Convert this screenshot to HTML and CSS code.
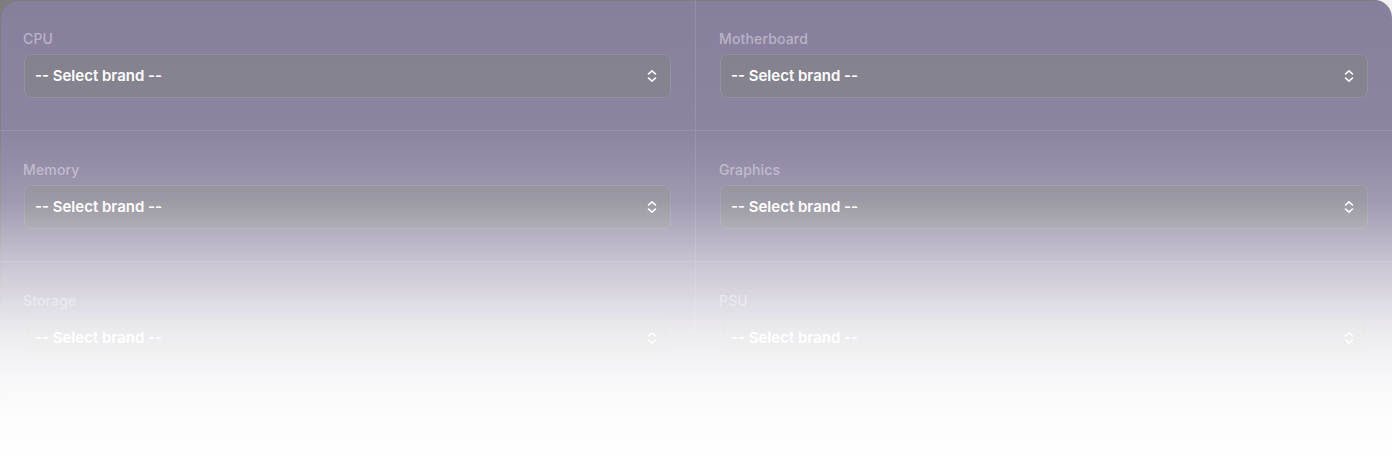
FILE: index.html
```html
<!DOCTYPE html>
<html>
<head>
<meta charset="utf-8">
<link rel="stylesheet" href="styles.css">
</head>
<body>
<div class="card">
  <div class="grid">
    <div class="cell">
      <div class="label">CPU</div>
      <div class="select"><span>-- Select brand --</span><svg class="chev" width="10" height="14" viewBox="0 0 10 14"><path d="M1.5 5 L5 1.8 L8.5 5 M1.5 9 L5 12.2 L8.5 9" fill="none" stroke="#fff" stroke-width="1.6" stroke-linecap="round" stroke-linejoin="round"/></svg></div>
    </div>
    <div class="cell">
      <div class="label">Motherboard</div>
      <div class="select"><span>-- Select brand --</span><svg class="chev" width="10" height="14" viewBox="0 0 10 14"><path d="M1.5 5 L5 1.8 L8.5 5 M1.5 9 L5 12.2 L8.5 9" fill="none" stroke="#fff" stroke-width="1.6" stroke-linecap="round" stroke-linejoin="round"/></svg></div>
    </div>
    <div class="cell">
      <div class="label">Memory</div>
      <div class="select"><span>-- Select brand --</span><svg class="chev" width="10" height="14" viewBox="0 0 10 14"><path d="M1.5 5 L5 1.8 L8.5 5 M1.5 9 L5 12.2 L8.5 9" fill="none" stroke="#fff" stroke-width="1.6" stroke-linecap="round" stroke-linejoin="round"/></svg></div>
    </div>
    <div class="cell">
      <div class="label">Graphics</div>
      <div class="select"><span>-- Select brand --</span><svg class="chev" width="10" height="14" viewBox="0 0 10 14"><path d="M1.5 5 L5 1.8 L8.5 5 M1.5 9 L5 12.2 L8.5 9" fill="none" stroke="#fff" stroke-width="1.6" stroke-linecap="round" stroke-linejoin="round"/></svg></div>
    </div>
    <div class="cell">
      <div class="label">Storage</div>
      <div class="select"><span>-- Select brand --</span><svg class="chev" width="10" height="14" viewBox="0 0 10 14"><path d="M1.5 5 L5 1.8 L8.5 5 M1.5 9 L5 12.2 L8.5 9" fill="none" stroke="#fff" stroke-width="1.6" stroke-linecap="round" stroke-linejoin="round"/></svg></div>
    </div>
    <div class="cell">
      <div class="label">PSU</div>
      <div class="select"><span>-- Select brand --</span><svg class="chev" width="10" height="14" viewBox="0 0 10 14"><path d="M1.5 5 L5 1.8 L8.5 5 M1.5 9 L5 12.2 L8.5 9" fill="none" stroke="#fff" stroke-width="1.6" stroke-linecap="round" stroke-linejoin="round"/></svg></div>
    </div>
  </div>
  <div class="fade"></div>
</div>
</body>
</html>
```

FILE: styles.css
```css
html, body {
  margin: 0;
  padding: 0;
}
body {
  width: 1392px;
  height: 457px;
  overflow: hidden;
  background: linear-gradient(to right, #7d7d7d, #f2f2f2);
  font-family: Inter, "Noto Sans", sans-serif;
}
.card {
  position: relative;
  height: 457px;
  background: #887f9d;
  border-radius: 18px 18px 0 0;
  box-shadow: inset 1px 1px 0 rgba(120,120,120,0.6);
  overflow: hidden;
}
.grid {
  display: grid;
  grid-template-columns: 696px 696px;
}
.cell {
  padding: 30px 24px 32px 24px;
  border-right: 1px solid #958da9;
  border-bottom: 1px solid #958da9;
}
.cell:nth-child(2n) {
  border-right: none;
}
.label {
  font-size: 14px;
  line-height: 18px;
  font-weight: 500;
  color: #b8b2c6;
  margin-bottom: 6px;
  margin-left: -1px;
  letter-spacing: 0.15px;
}
.select {
  display: flex;
  align-items: center;
  justify-content: space-between;
  height: 42px;
  padding: 0 13px 0 10px;
  background: #83808d;
  border: 1px solid #928da0;
  border-radius: 7px;
  color: #fff;
  font-size: 15px;
  line-height: 18px;
  font-weight: 600;
  letter-spacing: 0;
}
.select span {
  margin-top: -1px;
}
.chev {
  display: block;
}
.fade {
  position: absolute;
  left: 0;
  top: 0;
  right: 0;
  bottom: 0;
  pointer-events: none;
  background: linear-gradient(to bottom,
    rgba(255,255,255,0) 0px,
    rgba(255,255,255,0.04) 130px,
    rgba(255,255,255,0.2) 200px,
    rgba(255,255,255,0.58) 270px,
    rgba(255,255,255,0.84) 330px,
    rgba(255,255,255,0.94) 380px,
    rgba(255,255,255,0.98) 420px,
    rgba(255,255,255,1) 457px);
}
```
